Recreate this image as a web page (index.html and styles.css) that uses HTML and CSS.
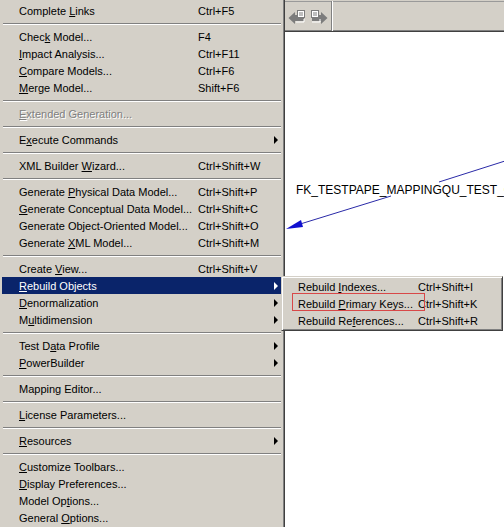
FILE: index.html
```html
<!DOCTYPE html>
<html>
<head>
<meta charset="utf-8">
<link rel="stylesheet" href="styles.css">
</head>
<body>
<div class="screen">
  <div class="menu">
    <div class="item"><span class="label">Complete <u>L</u>inks</span><span class="key">Ctrl+F5</span></div>
    <div class="sep"></div>
    <div class="item"><span class="label">Chec<u>k</u> Model...</span><span class="key">F4</span></div>
    <div class="item"><span class="label"><u>I</u>mpact Analysis...</span><span class="key">Ctrl+F11</span></div>
    <div class="item"><span class="label"><u>C</u>ompare Models...</span><span class="key">Ctrl+F6</span></div>
    <div class="item"><span class="label"><u>M</u>erge Model...</span><span class="key">Shift+F6</span></div>
    <div class="sep"></div>
    <div class="item disabled"><span class="label"><u>E</u>xtended Generation...</span><span class="key"></span></div>
    <div class="sep"></div>
    <div class="item"><span class="label">E<u>x</u>ecute Commands</span><span class="key"></span><span class="arrow"></span></div>
    <div class="sep"></div>
    <div class="item"><span class="label">XML Builder <u>W</u>izard...</span><span class="key">Ctrl+Shift+W</span></div>
    <div class="sep"></div>
    <div class="item"><span class="label">Generate <u>P</u>hysical Data Model...</span><span class="key">Ctrl+Shift+P</span></div>
    <div class="item"><span class="label"><u>G</u>enerate Conceptual Data Model...</span><span class="key">Ctrl+Shift+C</span></div>
    <div class="item"><span class="label">Generate Ob<u>j</u>ect-Oriented Model...</span><span class="key">Ctrl+Shift+O</span></div>
    <div class="item"><span class="label">Generate <u>X</u>ML Model...</span><span class="key">Ctrl+Shift+M</span></div>
    <div class="sep"></div>
    <div class="item"><span class="label">Create <u>V</u>iew...</span><span class="key">Ctrl+Shift+V</span></div>
    <div class="item active"><span class="label"><u>R</u>ebuild Objects</span><span class="key"></span><span class="arrow"></span></div>
    <div class="item"><span class="label"><u>D</u>enormalization</span><span class="key"></span><span class="arrow"></span></div>
    <div class="item"><span class="label">M<u>u</u>ltidimension</span><span class="key"></span><span class="arrow"></span></div>
    <div class="sep"></div>
    <div class="item"><span class="label">Test D<u>a</u>ta Profile</span><span class="key"></span><span class="arrow"></span></div>
    <div class="item"><span class="label"><u>P</u>owerBuilder</span><span class="key"></span><span class="arrow"></span></div>
    <div class="sep"></div>
    <div class="item"><span class="label">Mapping Editor...</span><span class="key"></span></div>
    <div class="sep"></div>
    <div class="item"><span class="label"><u>L</u>icense Parameters...</span><span class="key"></span></div>
    <div class="sep"></div>
    <div class="item"><span class="label"><u>R</u>esources</span><span class="key"></span><span class="arrow"></span></div>
    <div class="sep"></div>
    <div class="item"><span class="label"><u>C</u>ustomize Toolbars...</span><span class="key"></span></div>
    <div class="item"><span class="label"><u>D</u>isplay Preferences...</span><span class="key"></span></div>
    <div class="item"><span class="label">Model Op<u>t</u>ions...</span><span class="key"></span></div>
    <div class="item"><span class="label">General <u>O</u>ptions...</span><span class="key"></span></div>
  </div>
  <div class="pane">
    <div class="toolbar">
      <div class="tbgroup">
        <svg class="tbicon" width="18" height="14" viewBox="0 0 18 14">
          <polygon points="0.5,8 7,2 7,5 16,5 16,11 7,11 7,14" fill="#7c7c7c"/>
          <rect x="9.5" y="0.5" width="7" height="7" fill="#ffffff" stroke="#7c7c7c"/>
          <line x1="11" y1="3" x2="15" y2="3" stroke="#7c7c7c"/>
          <line x1="11" y1="5" x2="15" y2="5" stroke="#7c7c7c"/>
          <polyline points="8,12 16,12 16,9" fill="none" stroke="#ffffff"/>
        </svg>
        <svg class="tbicon" width="18" height="14" viewBox="0 0 18 14">
          <polygon points="17.5,8 11,2 11,5 2,5 2,11 11,11 11,14" fill="#7c7c7c"/>
          <rect x="1.5" y="0.5" width="7" height="7" fill="#ffffff" stroke="#7c7c7c"/>
          <line x1="3" y1="3" x2="7" y2="3" stroke="#7c7c7c"/>
          <line x1="3" y1="5" x2="7" y2="5" stroke="#7c7c7c"/>
          <polyline points="2,12 10,12 10,9" fill="none" stroke="#ffffff"/>
        </svg>
      </div>
    </div>
    <div class="canvas">
      <svg class="diagram" width="219" height="495" viewBox="0 0 219 495">
        <line x1="220" y1="129" x2="154" y2="150" stroke="#2a2aa8" stroke-width="1"/>
        <line x1="106" y1="164" x2="12" y2="193" stroke="#2a2aa8" stroke-width="1"/>
        <polygon points="1,197 16,188 18,195" fill="#1010d0"/>
        <text x="11" y="162" class="fk">FK_TESTPAPE_MAPPINGQU_TEST_QUESTION</text>
      </svg>
    </div>
  </div>
  <div class="submenu">
    <div class="item"><span class="slabel">Rebuild <u>I</u>ndexes...</span><span class="key">Ctrl+Shift+I</span></div>
    <div class="item"><span class="slabel">Rebuild <u>P</u>rimary Keys...</span><span class="key">Ctrl+Shift+K</span></div>
    <div class="item"><span class="slabel">Rebuild Re<u>f</u>erences...</span><span class="key">Ctrl+Shift+R</span></div>
    <div class="mark"></div>
  </div>
</div>
</body>
</html>
```

FILE: styles.css
```css
html, body {
  margin: 0;
  padding: 0;
}
body {
  width: 504px;
  height: 527px;
  overflow: hidden;
  background: #ffffff;
  font-family: "Liberation Sans", Arial, sans-serif;
  font-size: 11px;
  color: #000000;
}
.screen {
  position: relative;
  display: flex;
  width: 504px;
  height: 527px;
  overflow: hidden;
}
.menu {
  box-sizing: border-box;
  width: 285px;
  flex: none;
  height: 527px;
  padding: 2px 2px 0 2px;
  background: #d4d0c8;
  border-right: 1px solid #404040;
  box-shadow: inset -1px 0 0 #808080;
}
.item {
  box-sizing: border-box;
  display: flex;
  align-items: center;
  height: 17px;
  line-height: 16px;
  padding-top: 1px;
  padding-left: 17px;
  padding-right: 4px;
  white-space: nowrap;
}
.item u {
  text-decoration: underline;
  text-underline-offset: 1px;
}
.label {
  width: 179px;
  flex: none;
}
.key {
  flex: 1;
}
.arrow {
  width: 0;
  height: 0;
  margin-top: -1px;
  border-left: 4px solid #000000;
  border-top: 4px solid transparent;
  border-bottom: 4px solid transparent;
}
.item.active {
  background: #0a246a;
  color: #ffffff;
}
.item.active .arrow {
  border-left-color: #ffffff;
}
.item.disabled {
  color: #808080;
  text-shadow: 1px 1px 0 #ffffff;
}
.sep {
  height: 9px;
  box-sizing: border-box;
  margin: 0 1px;
  padding-top: 4px;
}
.sep::before {
  content: "";
  display: block;
  height: 1px;
  background: #808080;
  border-bottom: 1px solid #ffffff;
}
.pane {
  flex: 1;
  display: flex;
  flex-direction: column;
  min-width: 0;
}
.toolbar {
  box-sizing: border-box;
  height: 32px;
  flex: none;
  background: #d4d0c8;
  border-top: 1px solid #d4d0c8;
  box-shadow: inset 0 1px 0 #9a9a9a, inset 0 -1px 0 #808080;
  border-bottom: 1px solid #404040;
  display: flex;
}
.tbgroup {
  width: 47px;
  display: flex;
  align-items: center;
  gap: 4px;
  padding-left: 3px;
  padding-top: 2px;
  box-sizing: border-box;
  border-right: 1px solid #808080;
  box-shadow: 1px 0 0 #ffffff;
  height: 30px;
}
.tbicon {
  display: block;
}
.canvas {
  flex: 1;
  background: #ffffff;
  position: relative;
  overflow: hidden;
}
.diagram {
  position: absolute;
  left: 0;
  top: 0;
}
.fk {
  font-family: "Liberation Sans", Arial, sans-serif;
  font-size: 12px;
  fill: #000000;
}
.submenu {
  position: absolute;
  left: 281px;
  top: 276px;
  width: 222px;
  height: 55px;
  box-sizing: border-box;
  padding: 1px;
  background: #d4d0c8;
  border: 1px solid;
  border-color: #d4d0c8 #404040 #404040 #d4d0c8;
  box-shadow: inset 1px 1px 0 #ffffff, inset -1px -1px 0 #808080;
}
.submenu .item {
  padding-left: 15px;
}
.slabel {
  width: 120px;
  flex: none;
}
.mark {
  position: absolute;
  left: 10px;
  top: 16px;
  width: 133px;
  height: 18px;
  box-sizing: border-box;
  border: 1px solid #d84848;
}
```
